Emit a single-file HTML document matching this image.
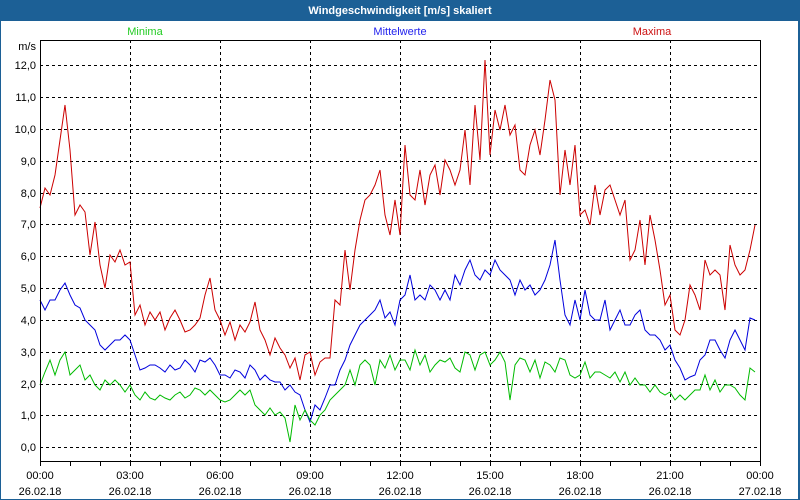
<!DOCTYPE html>
<html><head><meta charset="utf-8"><style>
html,body{margin:0;padding:0;width:800px;height:500px;overflow:hidden;background:#fff}
svg{display:block}
text{font-family:"Liberation Sans","DejaVu Sans",sans-serif;font-size:11px}
</style></head><body>
<svg width="800" height="500" viewBox="0 0 800 500">
<rect x="0" y="0" width="800" height="500" fill="#1c6096"/>
<rect x="1" y="21" width="797" height="478" fill="#fff"/>
<text x="400" y="14" text-anchor="middle" fill="#fff" font-weight="bold" style="font-size:11px">Windgeschwindigkeit [m/s] skaliert</text>
<text x="145" y="35" text-anchor="middle" fill="#22cc22">Minima</text>
<text x="400" y="35" text-anchor="middle" fill="#2222ee">Mittelwerte</text>
<text x="652" y="35" text-anchor="middle" fill="#cc1111">Maxima</text>
<text x="36" y="50" text-anchor="end" fill="#000">m/s</text>
<g stroke="#000" stroke-width="1" stroke-dasharray="3,3" shape-rendering="crispEdges">
<path d="M40 65.5H760M40 97.5H760M40 129.5H760M40 161.5H760M40 193.5H760M40 224.5H760M40 256.5H760M40 288.5H760M40 320.5H760M40 352.5H760M40 384.5H760M40 415.5H760M40 447.5H760"/>
<path d="M130.5 40V461M220.5 40V461M310.5 40V461M400.5 40V461M490.5 40V461M580.5 40V461M670.5 40V461"/>
</g>
<g fill="#000" text-anchor="end">
<text x="36" y="69">12,0</text><text x="36" y="101">11,0</text><text x="36" y="133">10,0</text><text x="36" y="165">9,0</text><text x="36" y="197">8,0</text><text x="36" y="228">7,0</text><text x="36" y="260">6,0</text><text x="36" y="292">5,0</text><text x="36" y="324">4,0</text><text x="36" y="356">3,0</text><text x="36" y="388">2,0</text><text x="36" y="419">1,0</text><text x="36" y="451">0,0</text>
</g>
<polyline fill="none" stroke="#cc0000" stroke-width="1" points="40,208 45,188 50,195 55,175 60,140 65,105 70,150 75,215 80,205 85,212 90,255 95,222 100,265 105,288 110,255 115,262 120,250 125,265 130,262 135,315 140,305 145,325 150,312 155,320 160,312 165,330 170,318 175,310 180,320 185,332 190,330 195,325 200,318 205,295 210,278 215,310 220,320 225,335 230,322 235,340 240,325 245,332 250,322 255,302 260,330 265,340 270,355 275,338 280,348 285,355 290,368 295,358 300,380 305,355 310,352 315,375 320,362 325,358 330,358 335,300 340,305 345,250 350,290 355,250 360,220 365,200 370,195 375,185 380,170 385,215 390,235 395,200 400,235 405,145 410,195 415,200 420,170 425,205 430,175 435,165 440,195 445,160 450,170 455,185 460,170 465,130 470,185 475,105 480,160 485,60 490,155 495,110 500,130 505,105 510,135 515,125 520,170 525,175 530,145 535,130 540,155 545,120 550,80 555,100 560,195 565,150 570,185 575,145 580,215 585,210 590,225 595,185 600,215 605,190 610,185 615,200 620,215 625,200 630,260 635,250 640,220 645,265 650,215 655,240 660,270 665,305 670,295 675,330 680,335 685,320 690,285 695,295 700,310 705,260 710,275 715,270 720,275 725,310 730,245 735,265 740,275 745,270 750,250 755,225"/>
<polyline fill="none" stroke="#0000dd" stroke-width="1" points="40,300 45,310 50,300 55,300 60,290 65,283 70,295 75,305 80,308 85,320 90,325 95,330 100,345 105,350 110,345 115,340 120,340 125,335 130,340 135,355 140,370 145,368 150,365 155,365 160,368 165,372 170,365 175,370 180,368 185,360 190,365 195,372 200,360 205,362 210,358 215,365 220,375 225,375 230,378 235,370 240,372 245,378 250,365 255,370 260,380 265,375 270,380 275,382 280,382 285,390 290,385 295,392 300,395 305,410 310,422 315,405 320,410 325,398 330,385 335,385 340,370 345,360 350,345 355,335 360,325 365,320 370,315 375,310 380,300 385,318 390,312 395,325 400,300 405,295 410,275 415,300 420,295 425,300 430,285 435,290 440,300 445,290 450,300 455,275 460,285 465,270 470,260 475,275 480,280 485,270 490,275 495,260 500,270 505,275 510,280 515,295 520,280 525,290 530,285 535,295 540,290 545,280 550,265 555,240 560,280 565,315 570,325 575,300 580,320 585,290 590,315 595,320 600,320 605,300 610,330 615,320 620,310 625,325 630,325 635,315 640,310 645,330 650,335 655,335 660,340 665,350 670,345 675,360 680,368 685,380 690,377 695,375 700,360 705,355 710,340 715,340 720,350 725,358 730,340 735,330 740,340 745,350 750,318 755,320"/>
<polyline fill="none" stroke="#00bb00" stroke-width="1" points="40,385 45,372 50,360 55,375 60,360 65,352 70,375 75,370 80,365 85,380 90,375 95,385 100,390 105,380 110,385 115,380 120,385 125,392 130,385 135,395 140,400 145,392 150,398 155,400 160,395 165,398 170,400 175,395 180,392 185,398 190,395 195,388 200,390 205,395 210,390 215,395 220,400 225,402 230,400 235,395 240,390 245,395 250,390 255,405 260,410 265,415 270,408 275,415 280,412 285,418 290,442 295,405 300,420 305,410 310,420 315,425 320,415 325,410 330,400 335,395 340,390 345,385 350,370 355,385 360,365 365,360 370,365 375,385 380,360 385,368 390,355 395,370 400,360 405,360 410,370 415,350 420,365 425,355 430,372 435,365 440,360 445,362 450,358 455,368 460,372 465,352 470,355 475,370 480,355 485,352 490,365 495,360 500,352 505,362 510,400 515,365 520,358 525,360 530,372 535,360 540,378 545,362 550,365 555,372 560,358 565,360 570,375 575,378 580,375 585,362 590,378 595,372 600,372 605,375 610,378 615,372 620,382 625,372 630,385 635,378 640,385 645,385 650,392 655,385 660,392 665,395 670,392 675,400 680,395 685,400 690,395 695,390 700,390 705,375 710,390 715,380 720,392 725,385 730,385 735,388 740,395 745,400 750,368 755,372"/>
<rect x="40.5" y="40.5" width="720" height="421" fill="none" stroke="#000" stroke-width="1" shape-rendering="crispEdges"/>
<path d="M40.5 461V466M70.5 461V466M100.5 461V466M130.5 461V466M160.5 461V466M190.5 461V466M220.5 461V466M250.5 461V466M280.5 461V466M310.5 461V466M340.5 461V466M370.5 461V466M400.5 461V466M430.5 461V466M460.5 461V466M490.5 461V466M520.5 461V466M550.5 461V466M580.5 461V466M610.5 461V466M640.5 461V466M670.5 461V466M700.5 461V466M730.5 461V466M760.5 461V466" stroke="#000" shape-rendering="crispEdges"/>
<g fill="#000" text-anchor="middle">
<text x="40" y="479">00:00</text><text x="40" y="495">26.02.18</text>
<text x="130" y="479">03:00</text><text x="130" y="495">26.02.18</text>
<text x="220" y="479">06:00</text><text x="220" y="495">26.02.18</text>
<text x="310" y="479">09:00</text><text x="310" y="495">26.02.18</text>
<text x="400" y="479">12:00</text><text x="400" y="495">26.02.18</text>
<text x="490" y="479">15:00</text><text x="490" y="495">26.02.18</text>
<text x="580" y="479">18:00</text><text x="580" y="495">26.02.18</text>
<text x="670" y="479">21:00</text><text x="670" y="495">26.02.18</text>
<text x="760" y="479">00:00</text><text x="760" y="495">27.02.18</text>
</g>
</svg>
</body></html>
